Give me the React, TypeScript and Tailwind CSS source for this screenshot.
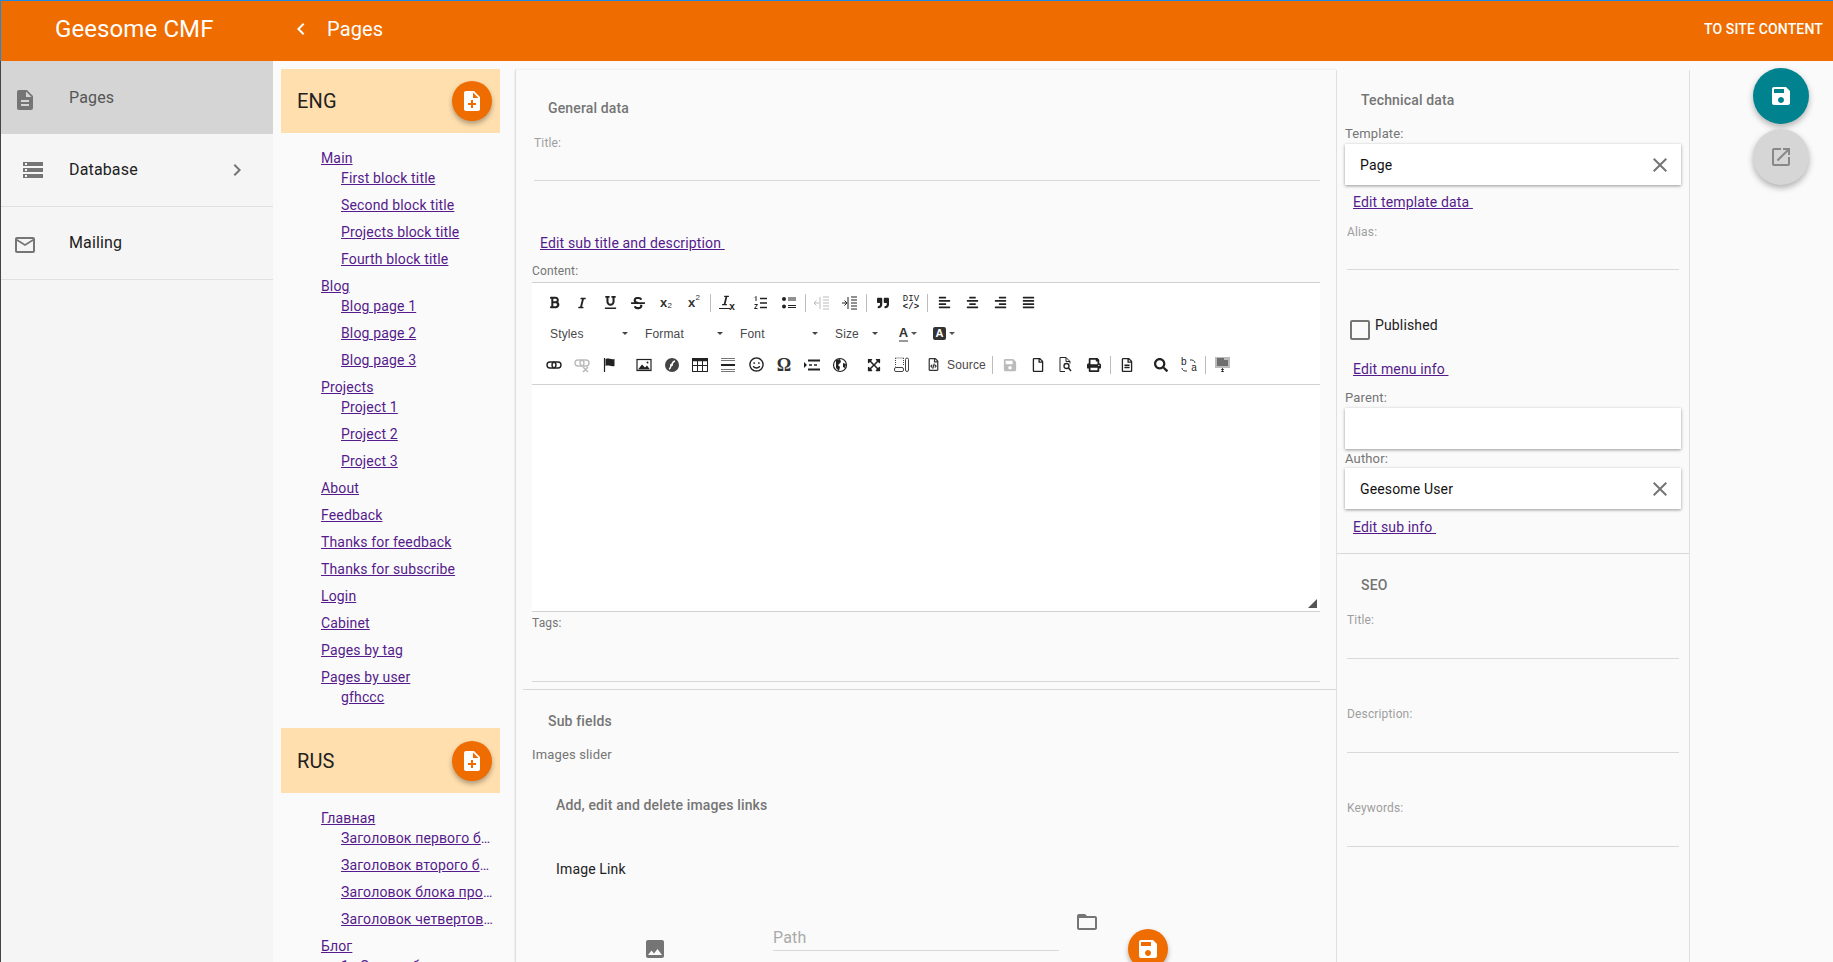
import React from 'react';
import {
  MdDescription, MdStorage, MdMailOutline, MdChevronRight, MdChevronLeft, MdNoteAdd, MdSave,
  MdOpenInNew, MdClose, MdImage, MdFolderOpen,
} from 'react-icons/md';
import {
  FaBold, FaItalic, FaUnderline, FaStrikethrough, FaQuoteRight, FaAlignLeft, FaAlignCenter, FaAlignRight, FaAlignJustify,
  FaRegSmile, FaExpandArrowsAlt, FaRegFileCode, FaSave, FaRegFile, FaPrint, FaRegFileAlt, FaSearch,
} from 'react-icons/fa';

type Node = { title: string; children?: string[] };

const engPages: Node[] = [
  { title: 'Main', children: ['First block title', 'Second block title', 'Projects block title', 'Fourth block title'] },
  { title: 'Blog', children: ['Blog page 1', 'Blog page 2', 'Blog page 3'] },
  { title: 'Projects', children: ['Project 1', 'Project 2', 'Project 3'] },
  { title: 'About' },
  { title: 'Feedback' },
  { title: 'Thanks for feedback' },
  { title: 'Thanks for subscribe' },
  { title: 'Login' },
  { title: 'Cabinet' },
  { title: 'Pages by tag' },
  { title: 'Pages by user', children: ['gfhccc'] },
];

const rusPages: Node[] = [
  { title: 'Главная', children: ['Заголовок первого блока', 'Заголовок второго блока', 'Заголовок блока проектов', 'Заголовок четвертова блока'] },
  { title: 'Блог', children: ['1я Запись блога'] },
];

const linkClasses = 'text-[#551a8b] underline text-sm leading-5';

const PageTree: React.FC<{ pages: Node[] }> = ({ pages }) => (
  <ul className="pl-[40px] pt-[15px] pb-[14px]">
    {pages.map((page) => (
      <li key={page.title} className="mb-[7px] text-sm leading-5">
        <a className={linkClasses}>{page.title}</a>
        {page.children && (
          <ul className="pl-5">
            {page.children.map((child, i) => (
              <li key={child} className={`truncate w-[155px] leading-5 text-sm text-[#551a8b] ${i < page.children!.length - 1 ? 'mb-[7px]' : ''}`}>
                <a className={linkClasses}>{child}</a>
              </li>
            ))}
          </ul>
        )}
      </li>
    ))}
  </ul>
);

const LocaleHeader: React.FC<{ title: string; height: string }> = ({ title, height }) => (
  <div className={`${height} bg-[#ffdfae] flex items-center justify-between pl-4 pr-2`}>
    <span className="text-xl text-[#212121]">{title}</span>
    <button className="w-10 h-10 rounded-full bg-[#ef6c00] flex items-center justify-center text-white shadow-[0_3px_5px_rgba(0,0,0,0.3)]">
      <MdNoteAdd size={24} />
    </button>
  </div>
);

const SideItem: React.FC<{ icon: React.ReactNode; label: string; active?: boolean; chevron?: boolean }> = ({ icon, label, active, chevron }) => (
  <div className={`h-[73px] flex items-center text-base ${active ? 'bg-[#d5d5d5] text-[#555555]' : 'border-b border-[#e0e0e0] text-[#212121]'}`}>
    <div className="w-[68px] shrink-0 text-[#757575]">{icon}</div>
    <span className="flex-1">{label}</span>
    {chevron && <MdChevronRight size={24} className="text-[#757575] mr-6" />}
  </div>
);

const SectionTitle: React.FC<{ className?: string; children: React.ReactNode }> = ({ className, children }) => (
  <div className={`text-sm leading-5 font-medium text-[#757575] ${className || ''}`}>{children}</div>
);

const Btn: React.FC<{ children?: React.ReactNode; off?: boolean }> = ({ children, off }) => (
  <span className={`w-7 h-[31px] flex items-center justify-center text-[#222] text-[14px] ${off ? 'opacity-30' : ''}`}>{children}</span>
);

const Sep: React.FC = () => <span className="w-px h-[18px] bg-[#bcbcbc] mx-[2px] self-center" />;

const arial = { fontFamily: '"Liberation Sans", sans-serif' };

const Combo: React.FC<{ label: string; w: string }> = ({ label, w }) => (
  <span className={`flex items-center justify-between h-[31px] pl-[10px] pr-[2px] text-xs text-[#484848] ${w}`} style={arial}>
    {label}
    <span className="w-0 h-0 border-x-[3px] border-x-transparent border-t-[3px] border-t-[#444]" />
  </span>
);

const Caret: React.FC = () => <span className="w-0 h-0 ml-[3px] border-x-[3px] border-x-transparent border-t-[3px] border-t-[#555]" />;

const Ico: React.FC<{ children: React.ReactNode }> = ({ children }) => (
  <svg width="16" height="16" viewBox="0 0 16 16" fill="none" stroke="#222" strokeWidth="1">{children}</svg>
);

const Script: React.FC<{ n: string; up?: boolean }> = ({ n, up }) => (
  <span className="flex font-bold text-[13px] leading-none text-[#333]" style={arial}>
    x<span className={`text-[8px] font-normal ${up ? '-mt-[2px]' : 'mt-[6px]'}`}>{n}</span>
  </span>
);

const Toolbar: React.FC = () => (
  <div className="pt-1 pl-2 h-[102px] bg-white border-b border-[#d1d1d1]">
    <div className="flex">
      <Btn><FaBold size={13} /></Btn>
      <Btn><FaItalic size={12} /></Btn>
      <Btn><FaUnderline size={13} /></Btn>
      <Btn><FaStrikethrough size={14} /></Btn>
      <Btn><Script n="2" /></Btn>
      <Btn><Script n="2" up /></Btn>
      <Sep />
      <Btn>
        <span className="relative block w-4 h-4">
          <FaItalic size={11} className="absolute left-[1px] top-0" />
          <span className="absolute left-0 top-[13px] w-[11px] h-px bg-[#222]" />
          <span className="absolute right-0 bottom-0 text-[10px] leading-[9px] font-bold" style={arial}>x</span>
        </span>
      </Btn>
      <span className="w-[6px]" />
      <Btn>
        <Ico>
          <path d="M7 3.5h7M7 8h7M7 12.5h7" strokeWidth="1.4" />
          <path d="M3 1.5v4.5M2 2.5l1-1M1.5 9.5h3l-3 4h3" strokeWidth="1" />
        </Ico>
      </Btn>
      <Btn>
        <Ico>
          <circle cx="3" cy="4" r="2" fill="#222" stroke="none" />
          <circle cx="3" cy="11.5" r="2" fill="#222" stroke="none" />
          <path d="M7 3h8M7 5h8M7 10.5h8M7 12.5h8" />
        </Ico>
      </Btn>
      <Sep />
      <Btn off>
        <Ico>
          <path d="M6 2v12M9 2h6M9 5h6M9 8h6M9 11h6M9 14h6" />
          <path d="M5 8H0M2.5 5.5L0 8l2.5 2.5" />
        </Ico>
      </Btn>
      <Btn>
        <Ico>
          <path d="M6 2v12M9 2h6M9 5h6M9 8h6M9 11h6M9 14h6" />
          <path d="M0 8h5M2.5 5.5L5 8l-2.5 2.5" />
        </Ico>
      </Btn>
      <Sep />
      <Btn><FaQuoteRight size={12} /></Btn>
      <Btn>
        <span className="flex flex-col items-center leading-[8px] text-[9px]" style={{ fontFamily: '"Liberation Mono", monospace' }}>
          <span>DIV</span>
          <span className="font-bold">&lt;/&gt;</span>
        </span>
      </Btn>
      <Sep />
      <Btn><FaAlignLeft size={13} /></Btn>
      <Btn><FaAlignCenter size={13} /></Btn>
      <Btn><FaAlignRight size={13} /></Btn>
      <Btn><FaAlignJustify size={13} /></Btn>
    </div>
    <div className="flex items-center">
      <Combo label="Styles" w="w-[90px]" />
      <span className="w-[5px]" />
      <Combo label="Format" w="w-[90px]" />
      <span className="w-[5px]" />
      <Combo label="Font" w="w-[90px]" />
      <span className="w-[5px]" />
      <Combo label="Size" w="w-[55px]" />
      <span className="w-[10px]" />
      <span className="w-9 flex items-center justify-center">
        <span className="border-b-2 border-[#999] font-bold text-[13px] leading-[14px] text-[#333]" style={arial}>A</span>
        <Caret />
      </span>
      <span className="w-9 flex items-center justify-center">
        <span className="w-[13px] h-[13px] rounded-[2px] bg-[#333] text-white font-bold text-[11px] leading-[13px] text-center" style={arial}>A</span>
        <Caret />
      </span>
    </div>
    <div className="flex items-center">
      <Btn>
        <Ico>
          <rect x="1" y="5" width="9" height="6" rx="3" strokeWidth="1.4" />
          <rect x="6" y="5" width="9" height="6" rx="3" strokeWidth="1.4" />
        </Ico>
      </Btn>
      <Btn off>
        <Ico>
          <rect x="1" y="3" width="9" height="6" rx="3" strokeWidth="1.4" />
          <rect x="6" y="3" width="9" height="6" rx="3" strokeWidth="1.4" />
          <path d="M9 10l5 5M14 10l-5 5" strokeWidth="1.6" />
        </Ico>
      </Btn>
      <Btn>
        <Ico>
          <path d="M2.5 1v14" strokeWidth="1.2" />
          <path d="M3.5 2c3-1.5 5 1 9 0v7c-4 1-6-1.500-9 0z" fill="#222" stroke="none" />
        </Ico>
      </Btn>
      <span className="w-[6px]" />
      <Btn>
        <Ico>
          <rect x="1" y="2.500" width="14" height="11" strokeWidth="1.2" />
          <path d="M2 12.500l4-5 3 3 2-2 3 4z" fill="#222" stroke="none" />
          <circle cx="11.500" cy="5.500" r="1" fill="#222" stroke="none" />
        </Ico>
      </Btn>
      <Btn>
        <Ico>
          <circle cx="8" cy="8" r="7" fill="#444" stroke="none" />
          <path d="M5 12c2.500-1 2-7 6-8M6 8h3" stroke="#fff" strokeWidth="1.5" />
        </Ico>
      </Btn>
      <Btn>
        <Ico>
          <rect x="0.500" y="1.500" width="15" height="13" />
          <path d="M0 3h16" strokeWidth="2.500" />
          <path d="M0 8.500h16M5.500 3v12M10.500 3v12" />
        </Ico>
      </Btn>
      <Btn>
        <Ico>
          <path d="M1 1.500h14M1 3.500h14M1 12.500h14M1 14.500h14" strokeWidth="0.8" stroke="#555" />
          <path d="M1 8h14" strokeWidth="2" />
        </Ico>
      </Btn>
      <Btn><FaRegSmile size={15} /></Btn>
      <Btn><span className="text-[18px] font-bold leading-none text-[#333]" style={{ fontFamily: '"Liberation Serif", serif' }}>Ω</span></Btn>
      <Btn>
        <Ico>
          <path d="M0 5l3 3-3 3z" fill="#222" stroke="none" />
          <path d="M4 3.500h12M4 12.500h12" strokeWidth="2" />
          <path d="M5 8h3M10 8h3" strokeWidth="1.500" />
        </Ico>
      </Btn>
      <Btn>
        <Ico>
          <circle cx="8" cy="8" r="6.500" strokeWidth="1.200" />
          <path d="M4 3l4-1 1 3-3 3 2 2-1 4-3-3zM11 6l3 1-1 4-2-1z" fill="#222" stroke="none" />
        </Ico>
      </Btn>
      <span className="w-[6px]" />
      <Btn><FaExpandArrowsAlt size={14} /></Btn>
      <Btn>
        <Ico>
          <path d="M1.500 1v8.500M1.500 1h8.500M9.500 1v8" strokeDasharray="1 1" stroke="#444" />
          <rect x="0.500" y="10.500" width="9" height="4" rx="1.500" stroke="#444" />
          <rect x="11.500" y="1" width="3" height="13.500" rx="1.500" stroke="#444" />
        </Ico>
      </Btn>
      <span className="ml-[11px] w-[63px] flex items-center gap-[7px] text-xs text-[#484848]" style={arial}>
        <FaRegFileCode size={13} className="text-[#333] shrink-0" />
        Source
      </span>
      <Sep />
      <span className="w-[1px]" />
      <Btn off><FaSave size={14} /></Btn>
      <Btn><FaRegFile size={14} /></Btn>
      <Btn>
        <Ico>
          <path d="M8 0.500H2v14h5M8 0.500l4 4v2M8 0.500v4h4" />
          <circle cx="8.500" cy="9" r="2.500" strokeWidth="1.300" />
          <path d="M10.500 11l2.500 3" strokeWidth="1.500" />
        </Ico>
      </Btn>
      <Btn><FaPrint size={14} /></Btn>
      <Sep />
      <Btn><FaRegFileAlt size={14} /></Btn>
      <span className="w-[6px]" />
      <Btn><FaSearch size={14} /></Btn>
      <Btn>
        <span className="relative block w-4 h-4 text-[10px] leading-[10px]" style={arial}>
          <span className="absolute left-0 top-0">b</span>
          <span className="absolute right-0 bottom-0">a</span>
          <svg className="absolute inset-0" width="16" height="16" viewBox="0 0 16 16" fill="none" stroke="#333"><path d="M14 6a4 3 0 0 0-5-3M1 11a4 3 0 0 0 5 3" /></svg>
        </span>
      </Btn>
      <Sep />
      <Btn>
        <svg width="15" height="15" viewBox="0 0 15 15"><rect width="15" height="11" fill="#bbb" /><path d="M2 2h7M2 4h11M2 6h11M2 8h11" stroke="#222" /><path d="M6 12.500h3M7.500 11v4M6 14.500h3" stroke="#222" strokeWidth="0.8" /></svg>
      </Btn>
    </div>
  </div>
);

const Line: React.FC<{ className?: string }> = ({ className }) => <div className={`h-px bg-[#d9d9d9] ${className || ''}`} />;

const SelectBox: React.FC<{ value?: string }> = ({ value }) => (
  <div className="h-[41px] bg-white shadow-[0_1px_3px_rgba(0,0,0,0.4)] flex items-center justify-between pl-[15px] pr-[9px] text-sm text-[#111]">
    <span>{value}</span>
    {value && <MdClose size={24} className="text-[#757575]" />}
  </div>
);

const MainPanel: React.FC = () => (
  <div className="w-[821px] shrink-0 mt-[9px] bg-[#fafafa] border-l border-[#e0e0e0] shadow-[0_0_2px_rgba(0,0,0,0.12)]">
    <SectionTitle className="mt-[28px] ml-[32px]">General data</SectionTitle>
    <div className="mt-[17px] ml-[18px] text-xs leading-4 text-[#9e9e9e]">Title:</div>
    <Line className="mt-[29px] ml-[18px] mr-[16px]" />
    <a className={`${linkClasses} block mt-[52px] ml-[24px]`}>Edit sub title and description&nbsp;</a>
    <div className="mt-[10px] ml-[16px] text-xs leading-4 text-[#757575]">Content:</div>
    <div className="mt-[3px] ml-[16px] mr-[16px] h-[330px] bg-white border-y border-[#d1d1d1] relative">
      <Toolbar />
      <span className="absolute right-[3px] bottom-[3px] w-0 h-0 border-l-[9px] border-l-transparent border-b-[9px] border-b-[#555]" />
    </div>
    <div className="mt-[3px] ml-[16px] text-xs leading-4 text-[#757575]">Tags:</div>
    <Line className="mt-[50px] ml-[16px] mr-[16px]" />
    <Line className="mt-[7px] ml-[7px]" />
    <SectionTitle className="mt-[21px] ml-[32px]">Sub fields</SectionTitle>
    <div className="mt-[16px] ml-[16px] text-[13px] leading-4 text-[#757575]">Images slider</div>
    <SectionTitle className="mt-[32px] ml-[40px]">Add, edit and delete images links</SectionTitle>
    <div className="mt-[44px] ml-[40px] text-sm leading-5 text-[#212121]">Image Link</div>
    <div className="mt-[35px] flex items-start">
      <MdImage size={24} className="text-[#757575] ml-[127px] mt-[23px] shrink-0" />
      <div className="ml-[106px] w-[286px] mt-[12px] shrink-0">
        <div className="text-base leading-6 text-[#aaaaaa]">Path</div>
        <Line />
      </div>
      <MdFolderOpen size={24} className="text-[#757575] ml-[16px] -mt-[4px] shrink-0" />
      <button className="w-10 h-10 ml-[29px] mt-[15px] rounded-full bg-[#ef6c00] text-white flex items-center justify-center shadow-[0_3px_5px_rgba(0,0,0,0.3)] shrink-0">
        <MdSave size={24} />
      </button>
    </div>
  </div>
);

const SeoField: React.FC<{ label: string; top: string }> = ({ label, top }) => (
  <div className={top}>
    <div className="ml-[10px] text-xs leading-4 text-[#9e9e9e]">{label}</div>
    <Line className="mt-[30px] ml-[10px] mr-[10px]" />
  </div>
);

const TechPanel: React.FC = () => (
  <div className="w-[354px] shrink-0 mt-[9px] bg-[#fafafa] border-x border-[#e0e0e0]">
    <SectionTitle className="mt-[20px] ml-[24px]">Technical data</SectionTitle>
    <div className="mt-[16px] ml-[8px] text-[13px] leading-4 text-[#757575]">Template:</div>
    <div className="mt-[2px] mx-[8px]"><SelectBox value="Page" /></div>
    <a className={`${linkClasses} block mt-[7px] ml-[16px]`}>Edit template data&nbsp;</a>
    <div className="mt-[12px] ml-[10px] text-xs leading-4 text-[#9e9e9e]">Alias:</div>
    <Line className="mt-[29px] ml-[10px] mr-[10px]" />
    <div className="mt-[45px] ml-[13px] flex items-start">
      <span className="w-5 h-5 mt-[5px] border-2 border-[#757575] rounded-[2px]" />
      <span className="ml-[5px] text-sm leading-5 text-[#212121]">Published</span>
    </div>
    <a className={`${linkClasses} block mt-[19px] ml-[16px]`}>Edit menu info&nbsp;</a>
    <div className="mt-[11px] ml-[8px] text-[13px] leading-4 text-[#757575]">Parent:</div>
    <div className="mt-[2px] mx-[8px]"><SelectBox /></div>
    <div className="mt-[2px] ml-[8px] text-[13px] leading-4 text-[#757575]">Author:</div>
    <div className="mt-[1px] mx-[8px]"><SelectBox value="Geesome User" /></div>
    <a className={`${linkClasses} block mt-[8px] ml-[16px]`}>Edit sub info&nbsp;</a>
    <Line className="mt-[16px]" />
    <SectionTitle className="mt-[21px] ml-[24px]">SEO</SectionTitle>
    <SeoField label="Title:" top="mt-[17px]" />
    <SeoField label="Description:" top="mt-[47px]" />
    <SeoField label="Keywords:" top="mt-[47px]" />
  </div>
);

const App: React.FC = () => (
  <div className="h-screen overflow-hidden flex flex-col bg-[#fafafa] border-t border-[#1e88e5] tracking-[0.15px]" style={{ fontFamily: 'Roboto, sans-serif' }}>
    <header className="h-[60px] shrink-0 pb-1 bg-[#ef6c00] text-white flex items-center border-l border-[#1e88e5]">
      <span className="ml-[54px] w-[220px] text-2xl tracking-[0.1px]">Geesome CMF</span>
      <MdChevronLeft size={24} className="ml-[14px]" />
      <span className="ml-[14px] text-xl flex-1">Pages</span>
      <span className="mr-[10px] text-sm font-medium">TO SITE CONTENT</span>
    </header>
    <div className="flex-1 min-h-0 flex">
      <aside className="w-[273px] shrink-0 bg-[#f5f5f5] border-l border-[#444]">
        <SideItem active label="Pages" icon={<MdDescription size={24} className="ml-[12px] translate-y-[2px]" />} />
        <SideItem chevron label="Database" icon={<MdStorage size={24} className="ml-[20px]" />} />
        <SideItem label="Mailing" icon={<MdMailOutline size={24} className="ml-[12px] translate-y-[2px]" />} />
      </aside>
      <div className="w-[242px] shrink-0 pt-2 pl-2 pr-[15px]">
        <LocaleHeader title="ENG" height="h-16" />
        <PageTree pages={engPages} />
        <LocaleHeader title="RUS" height="h-[65px]" />
        <PageTree pages={rusPages} />
      </div>
      <MainPanel />
      <TechPanel />
      <div className="flex-1 flex flex-col items-end pt-[7px] pr-6">
        <button className="w-14 h-14 rounded-full bg-[#00838f] text-white flex items-center justify-center shadow-[0_3px_6px_rgba(0,0,0,0.3)]">
          <MdSave size={24} />
        </button>
        <button className="w-14 h-14 mt-[5px] rounded-full bg-[#d6d6d6] text-[#888888] flex items-center justify-center shadow-[0_3px_6px_rgba(0,0,0,0.3)]">
          <MdOpenInNew size={24} />
        </button>
      </div>
    </div>
  </div>
);

export default App;
